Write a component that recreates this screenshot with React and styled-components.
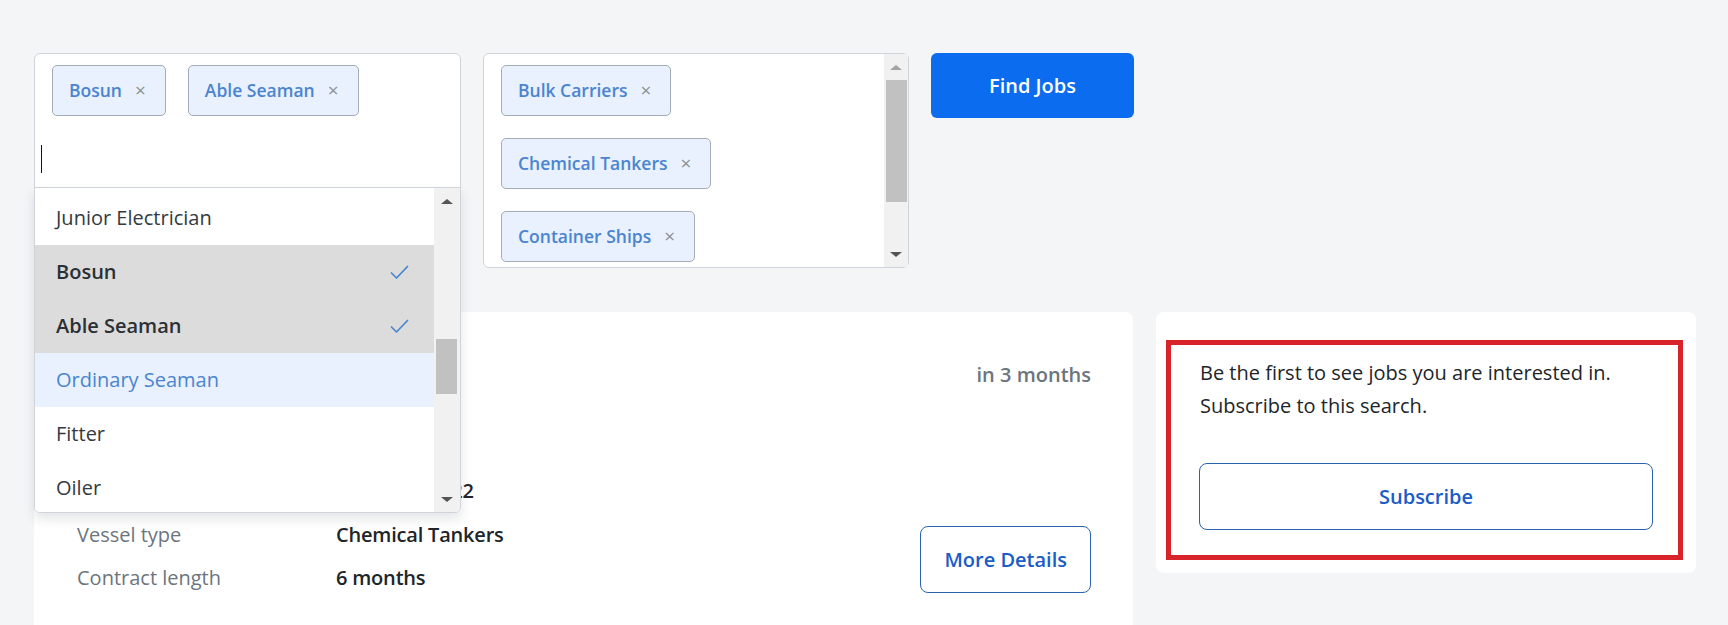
import React from 'react';
import styled, { createGlobalStyle } from 'styled-components';

const GlobalStyle = createGlobalStyle`
  * { box-sizing: border-box; }
  html, body { margin: 0; padding: 0; background: #f4f5f7; }
  body {
    font-family: "Open Sans", "Noto Sans", "Liberation Sans", sans-serif;
    font-size: 20px;
    line-height: 30px;
    color: #212529;
  }
`;

const Page = styled.div`
  height: 625px;
  overflow: hidden;
  padding: 53px 32px 0 34px;
`;

const SearchRow = styled.div`
  position: relative;
  z-index: 2;
  display: grid;
  grid-template-columns: 427px 426px 203px;
  column-gap: 22px;
  align-items: start;
  margin-bottom: 44px;
`;

const SelectBox = styled.div`
  position: relative;
  height: ${p => p.$height}px;
  background: #fff;
  border: 1px solid #cfd4da;
  border-radius: ${p => (p.$open ? '6px 6px 0 0' : '6px')};
  display: flex;
`;

const SelectContent = styled.div`
  flex: 1;
  min-width: 0;
  overflow: hidden;
  padding: 11px 17px 0 6px;
`;

const TagList = styled.div`
  display: flex;
  flex-direction: ${p => (p.$stacked ? 'column' : 'row')};
  align-items: flex-start;
  flex-wrap: wrap;
  gap: 22px;
  margin-left: 11px;
`;

const Tag = styled.span`
  display: inline-flex;
  align-items: center;
  height: 51px;
  padding: 0 19px 0 16px;
  background: #e8f1fd;
  border: 1px solid #a3abb6;
  border-radius: 5px;
  color: #4b84d0;
  font-size: 17.5px;
  font-weight: 600;
  line-height: 27px;
  white-space: nowrap;
`;

const TagRemove = styled.span`
  margin-left: 13px;
  color: #8c9198;
  font-weight: 400;
  font-size: 19px;
`;

const SearchInput = styled.div`
  height: 42px;
  margin-top: 22px;
  display: flex;
  align-items: center;
`;

const Caret = styled.span`
  display: block;
  width: 1px;
  height: 28px;
  background: #111;
`;

const Dropdown = styled.div`
  position: absolute;
  top: 100%;
  left: -1px;
  right: -1px;
  height: 326px;
  background: #fff;
  border: 1px solid #cfd4da;
  border-radius: 0 0 6px 6px;
  box-shadow: 0 6px 12px rgba(30, 40, 60, 0.12);
  display: flex;
  overflow: hidden;
`;

const OptionList = styled.div`
  flex: 1;
  padding-top: 3px;
  overflow: hidden;
`;

const Option = styled.div`
  height: 54px;
  display: flex;
  align-items: center;
  justify-content: space-between;
  padding: 0 25px 0 21px;
  background: ${p => (p.$selected ? '#dcdcdc' : p.$active ? '#e8f1fd' : '#fff')};
  color: ${p => (p.$selected ? '#2b3035' : p.$active ? '#4b84d0' : '#343a40')};
  font-weight: ${p => (p.$selected ? 600 : 400)};
`;

const Scrollbar = styled.div`
  width: ${p => p.$width}px;
  flex: none;
  background: #f1f1f1;
  display: flex;
  flex-direction: column;
`;

const ArrowCell = styled.div`
  height: 26px;
  display: flex;
  align-items: center;
  justify-content: center;
  flex: none;
`;

const Arrow = styled.span`
  width: 0;
  height: 0;
  border-left: 6px solid transparent;
  border-right: 6px solid transparent;
  ${p => (p.$down ? 'border-top' : 'border-bottom')}: 5px solid ${p => (p.$dim ? '#a3a3a3' : '#555')};
`;

const Track = styled.div`
  flex: 1;
  padding: ${p => p.$offset}px 1px 0 2px;
`;

const Thumb = styled.div`
  width: 21px;
  height: ${p => p.$size}px;
  background: #c1c1c1;
`;

const FindButton = styled.button`
  height: 65px;
  border: none;
  border-radius: 6px;
  background: #0b6cf0;
  color: #fff;
  font-family: inherit;
  font-size: 20px;
  font-weight: 600;
  line-height: 30px;
  cursor: pointer;
`;

const MainRow = styled.div`
  display: grid;
  grid-template-columns: 1099px 540px;
  column-gap: 23px;
  align-items: start;
`;

const JobCard = styled.div`
  background: #fff;
  border-radius: 8px;
  padding: 42px 42px 42px 43px;
`;

const CardHeader = styled.div`
  height: 42px;
  display: flex;
  align-items: center;
  justify-content: flex-end;
`;

const Posted = styled.span`
  color: #6c757d;
  font-weight: 600;
`;

const CardBody = styled.div`
  margin-top: 80px;
  display: flex;
  align-items: flex-end;
  justify-content: space-between;
`;

const Details = styled.dl`
  margin: 0;
  display: grid;
  grid-template-columns: 259px auto;
  row-gap: 13.5px;
`;

const Label = styled.dt`
  color: #6c757d;
`;

const Value = styled.dd`
  margin: 0;
  font-weight: 600;
  color: #212529;
  letter-spacing: -0.2px;
  white-space: nowrap;
`;

const OutlineButton = styled.button`
  display: block;
  width: ${p => (p.$block ? '100%' : 'auto')};
  height: 67px;
  padding: 0 23px;
  background: #fff;
  border: 1px solid #2a62ad;
  border-radius: 8px;
  color: #1a5cc8;
  font-family: inherit;
  font-size: 20px;
  font-weight: 600;
  line-height: 30px;
  cursor: pointer;
`;

const SideCard = styled.div`
  background: #fff;
  border-radius: 8px;
  padding: 28px 13px 13px 10px;
`;

const Highlight = styled.div`
  border: 5px solid #d9232b;
  padding: 11px 25px 25px 28px;
`;

const SideText = styled.p`
  margin: 0 0 41px 1px;
  line-height: 33px;
  color: #212529;
`;

const Check = () => (
  <svg width="19" height="15" viewBox="0 0 19 15" fill="none">
    <polyline points="1.5,8 6.5,13 17.5,1.5" stroke="#4b84d0" strokeWidth="1.7" strokeLinecap="round" strokeLinejoin="round" />
  </svg>
);

const ScrollBar = ({ width, offset, size, dimUp }) => (
  <Scrollbar $width={width}>
    <ArrowCell><Arrow $dim={dimUp} /></ArrowCell>
    <Track $offset={offset}><Thumb $size={size} /></Track>
    <ArrowCell><Arrow $down /></ArrowCell>
  </Scrollbar>
);

const ranks = [
  { name: 'Junior Electrician' },
  { name: 'Bosun', selected: true },
  { name: 'Able Seaman', selected: true },
  { name: 'Ordinary Seaman', active: true },
  { name: 'Fitter' },
  { name: 'Oiler' },
  { name: 'Cook' },
];

const vessels = ['Bulk Carriers', 'Chemical Tankers', 'Container Ships'];

const details = [
  ['Joining date', '12 March 2022'],
  ['Vessel type', 'Chemical Tankers'],
  ['Contract length', '6 months'],
];

export default function App() {
  return (
    <>
      <GlobalStyle />
      <Page>
        <SearchRow>
          <SelectBox $height={135} $open>
            <SelectContent>
              <TagList>
                <Tag>Bosun<TagRemove>×</TagRemove></Tag>
                <Tag>Able Seaman<TagRemove>×</TagRemove></Tag>
              </TagList>
              <SearchInput><Caret /></SearchInput>
            </SelectContent>
            <Dropdown>
              <OptionList>
                {ranks.map(r => (
                  <Option key={r.name} $selected={r.selected} $active={r.active}>
                    <span>{r.name}</span>
                    {r.selected && <Check />}
                  </Option>
                ))}
              </OptionList>
              <ScrollBar width={26} offset={125} size={55} />
            </Dropdown>
          </SelectBox>

          <SelectBox $height={215}>
            <SelectContent>
              <TagList $stacked>
                {vessels.map(v => (
                  <Tag key={v}>{v}<TagRemove>×</TagRemove></Tag>
                ))}
              </TagList>
            </SelectContent>
            <ScrollBar width={24} offset={0} size={122} dimUp />
          </SelectBox>

          <FindButton>Find Jobs</FindButton>
        </SearchRow>

        <MainRow>
          <JobCard>
            <CardHeader>
              <Posted>in 3 months</Posted>
            </CardHeader>
            <CardBody>
              <Details>
                {details.map(([k, v]) => (
                  <React.Fragment key={k}>
                    <Label>{k}</Label>
                    <Value>{v}</Value>
                  </React.Fragment>
                ))}
              </Details>
              <OutlineButton>More Details</OutlineButton>
            </CardBody>
          </JobCard>

          <SideCard>
            <Highlight>
              <SideText>
                Be the first to see jobs you are interested in.
                <br />
                Subscribe to this search.
              </SideText>
              <OutlineButton $block>Subscribe</OutlineButton>
            </Highlight>
          </SideCard>
        </MainRow>
      </Page>
    </>
  );
}
